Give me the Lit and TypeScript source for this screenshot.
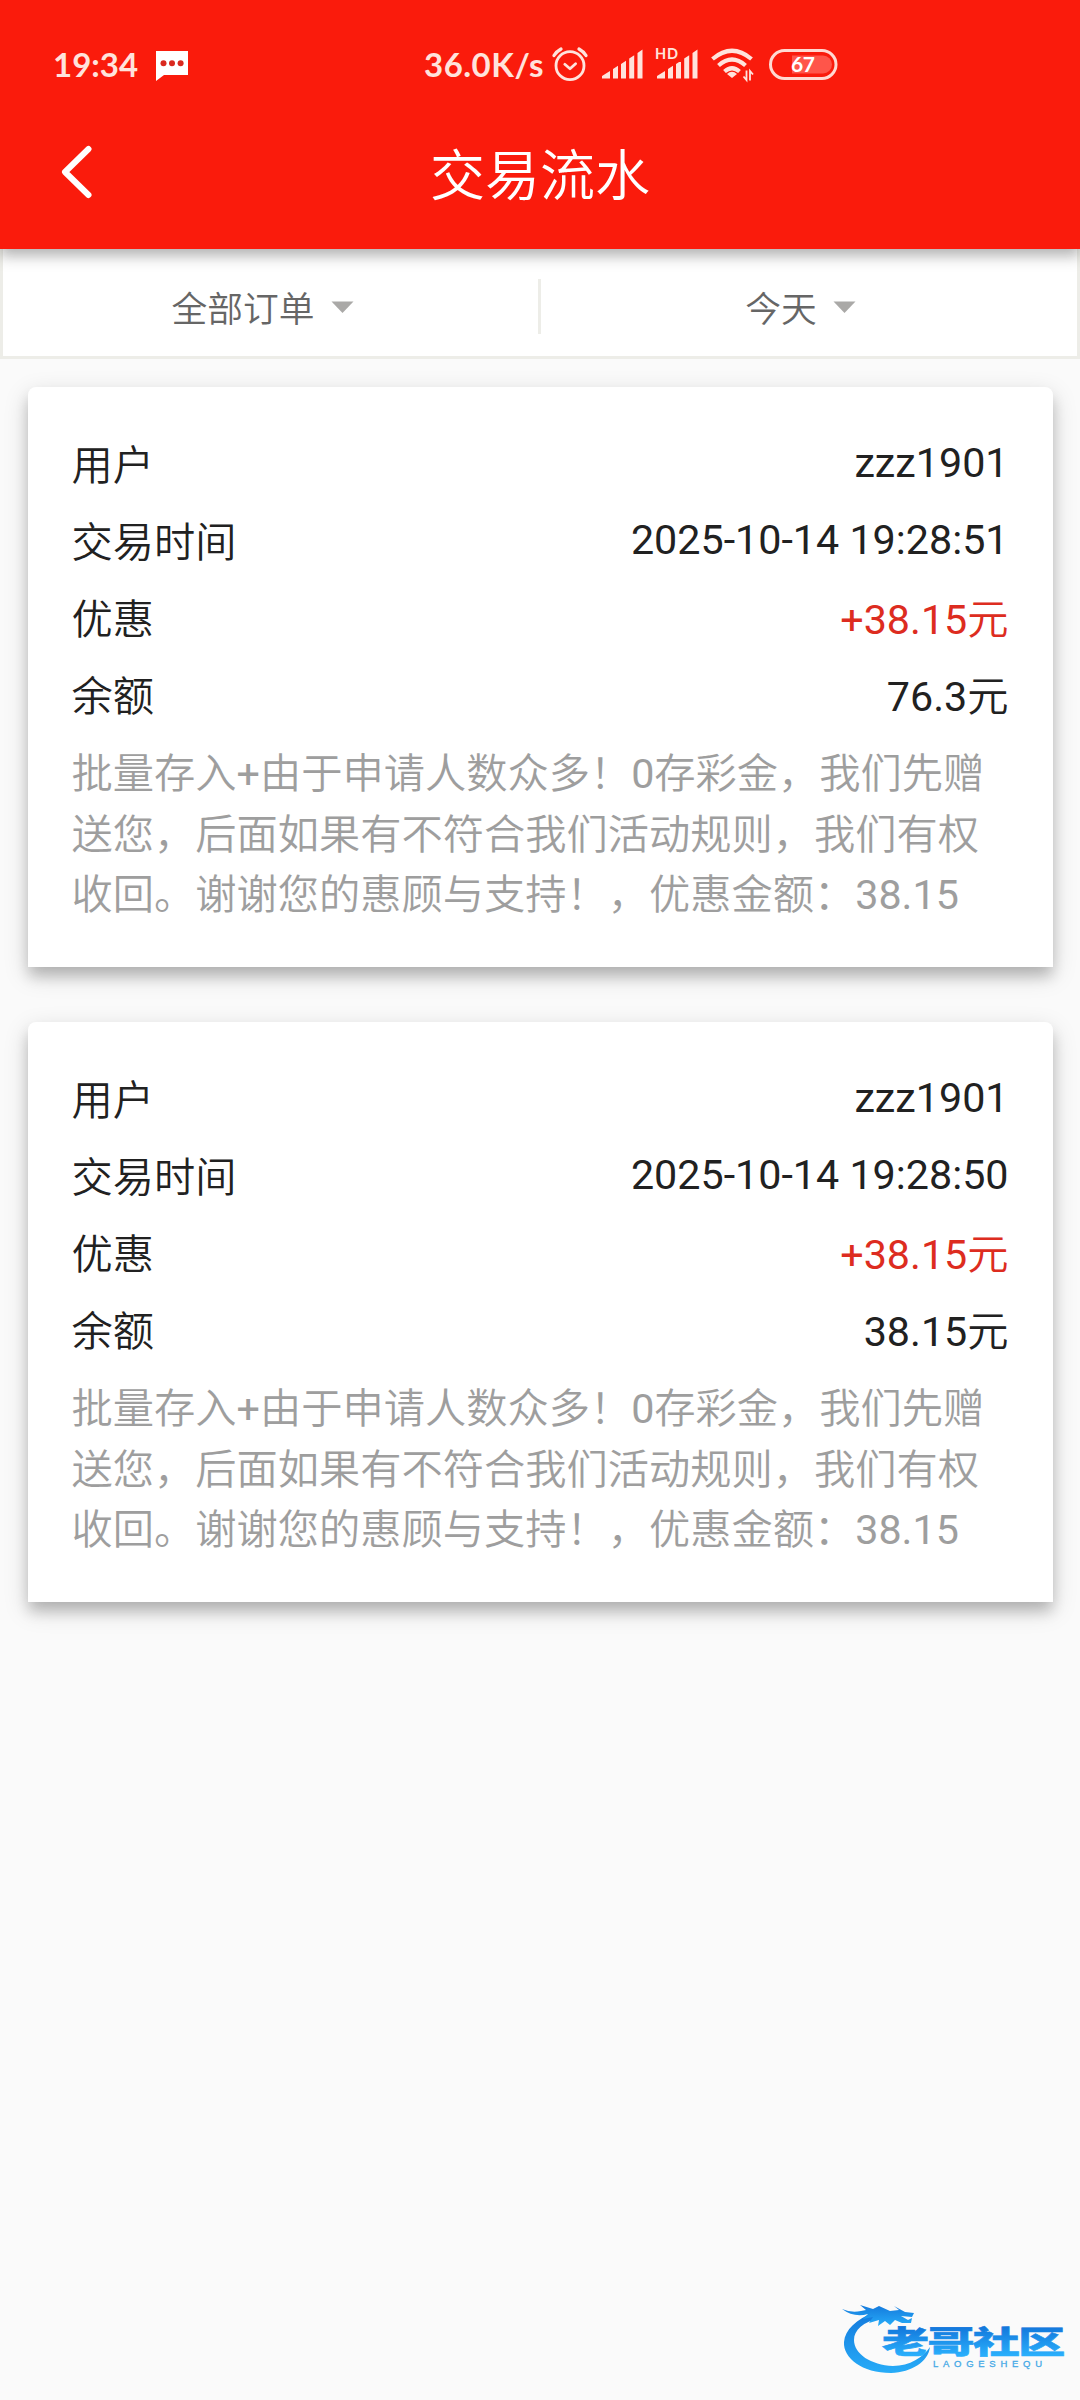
import { LitElement, html, css, svg } from "lit";
import { customElement, property } from "lit/decorators.js";

interface Transaction {
  user: string;
  time: string;
  bonus: string;
  balance: string;
  note: string;
}

const NOTE =
  "批量存入+由于申请人数众多！0存彩金，我们先赠送您，后面如果有不符合我们活动规则，我们有权收回。谢谢您的惠顾与支持！，优惠金额：38.15";

const TRANSACTIONS: Transaction[] = [
  { user: "zzz1901", time: "2025-10-14 19:28:51", bonus: "+38.15元", balance: "76.3元", note: NOTE },
  { user: "zzz1901", time: "2025-10-14 19:28:50", bonus: "+38.15元", balance: "38.15元", note: NOTE },
];

const signalBars = svg`
  <path d="M0 29.5V27l8-5v7.5z M11 20l5-3.2v12.7h-5z M19 15l5-3.2v17.7h-5z M27.2 9.500l5-3.300v23.300h-5z M35.500 4l5-3.500v29h-5z"/>`;

@customElement("status-bar")
class StatusBar extends LitElement {
  static styles = css`
    :host {
      display: flex;
      align-items: center;
      height: 95px;
      padding: 33px 0 0 53px;
      box-sizing: border-box;
      color: #ffe3dc;
      font: 700 33px/62px Lato, "Liberation Sans", sans-serif;
    }
    .time { width: 102px; letter-spacing: 0; }
    .chat { width: 269px; padding-top: 3px; }
    .rate { width: 126px; letter-spacing: 0.5px; white-space: nowrap; }
    svg { display: block; flex: none; overflow: visible; }
    .alarm { margin: 0 14px 0 2px; }
    .bars { margin: 0 13.500px 0 0; }
    .wifi { margin-right: 15px; }
    .hd { font: 700 14.500px Lato, sans-serif; }
    .level { font: 700 21px Lato, sans-serif; }
  `;

  render() {
    return html`
      <span class="time">19:34</span>
      <span class="chat">
        <svg width="34" height="32" viewBox="0 0 34 32">
          <path fill="#fff" d="M1 1h32v24H9l-8 6z" />
          <g fill="#d9291f"><circle cx="8.500" cy="13.200" r="3" /><circle cx="17" cy="13.200" r="3" /><circle cx="25.600" cy="13.200" r="3" /></g>
        </svg>
      </span>
      <span class="rate">36.0K/s</span>
      <svg class="alarm" width="36" height="34" viewBox="0 0 36 34" fill="none" stroke="#ffe3dc" stroke-width="2.800" stroke-linecap="round">
        <circle cx="18" cy="18.700" r="14" />
        <path d="M2 8.500Q4.500 4.500 9 2M34 8.500Q31.500 4.500 27 2" stroke-width="3.300" />
        <path d="m12.800 17.300 5.200 4.400 5.600-5" stroke-linejoin="round" />
      </svg>
      <svg class="bars" width="41" height="31" viewBox="0 0 41 31" fill="#ffe3dc">${signalBars}</svg>
      <svg class="bars" width="41" height="31" viewBox="0 0 41 31" fill="#ffe3dc">
        <clipPath id="below-hd"><path d="M0 13h24V0h17v31H0z" /></clipPath>
        <g clip-path="url(#below-hd)">${signalBars}</g>
        <text class="hd" x="-2" y="10" textLength="23">HD</text>
      </svg>
      <svg class="wifi" width="43" height="34" viewBox="0 0 43 34" fill="none" stroke="#ffe3dc" stroke-width="4.200">
        <path d="M1.500 12Q21 -4.500 40.500 12M7.500 18.500Q21 6.500 34.500 18.500M13.500 24.500Q21 18 28.500 24.500" />
        <path d="M21 31l-5-4q5-4.300 10 0z" fill="#ffe3dc" stroke="none" />
        <path d="M35.500 23.500v9.500l-3-3.500M39 33.500v-9.500l3 3.500" stroke-width="1.800" />
      </svg>
      <svg width="69" height="31" viewBox="0 0 69 31">
        <rect x="1.500" y="1.500" width="65.500" height="28" rx="14" fill="none" stroke="#ffd9d2" stroke-width="3" />
        <path d="M23 6.500h31a9 9 0 0 1 0 18H23z" fill="#ff554a" />
        <text class="level" x="22" y="23.300" fill="#fff" textLength="24">67</text>
      </svg>
    `;
  }
}

@customElement("filter-cell")
class FilterCell extends LitElement {
  static styles = css`
    :host { display: flex; flex: 1; align-items: center; justify-content: center; }
    .label { padding-top: 6px; font-size: 35.75px; line-height: 52px; color: #666; }
    .arrow { display: block; width: 55px; height: 55px; }
  `;
  @property() label = "";

  render() {
    return html`<span class="label">${this.label}</span>
      <svg class="arrow" viewBox="0 0 24 24"><path fill="#aaa9a7" d="m7.200 9.800 4.800 5 4.800-5z" /></svg>`;
  }
}

@customElement("transaction-card")
class TransactionCard extends LitElement {
  static styles = css`
    :host {
      display: block;
      box-sizing: border-box;
      height: 580px;
      padding: 38px 44px 0;
      border-radius: 8px 8px 0 0;
      background: #fff;
      color: #212121;
      font-size: 41.25px;
      box-shadow: 0 10px 14px -1px rgba(0, 0, 0, 0.18), 0 8px 24px rgba(0, 0, 0, 0.17);
    }
    .row { display: flex; justify-content: space-between; height: 77.3px; line-height: 77.3px; }
    .cjk { padding-top: 2px; }
    .label { padding-top: 3px; }
    .bonus { color: #dd2c20; }
    .note { margin: 10px 0 0; line-height: 60.4px; color: #9e9e9e; }
  `;
  @property({ attribute: false }) item!: Transaction;

  render() {
    const { user, time, bonus, balance, note } = this.item;
    return html`
      <div class="row"><span class="label">用户</span><span>${user}</span></div>
      <div class="row"><span class="label">交易时间</span><span>${time}</span></div>
      <div class="row"><span class="cjk">优惠</span><span class="cjk bonus">${bonus}</span></div>
      <div class="row"><span class="cjk">余额</span><span class="cjk">${balance}</span></div>
      <p class="note">${note}</p>
    `;
  }
}

@customElement("site-mark")
class SiteMark extends LitElement {
  static styles = css`
    :host { display: block; width: 224px; height: 76px; }
    svg { display: block; overflow: visible; }
    .name { font: 900 40px "Noto Sans CJK SC", sans-serif; }
    .latin { font: 400 9.500px "Liberation Sans", sans-serif; }
  `;

  render() {
    return html`
      <svg width="224" height="76" viewBox="0 0 224 76">
        <defs>
          <linearGradient id="ring" x1="0" y1="0" x2="0" y2="1">
            <stop offset="0" stop-color="#1479dc" /><stop offset="1" stop-color="#27acf8" />
          </linearGradient>
          <linearGradient id="word" gradientUnits="userSpaceOnUse" x1="0" y1="-33" x2="0" y2="3">
            <stop offset="0" stop-color="#1378dc" /><stop offset="1" stop-color="#29aefb" />
          </linearGradient>
        </defs>
        <g fill="url(#ring)">
          <path d="M33 15C14 22 3 33 2 45C1 61 20 76 49 76C70 75 86 65 88 50C81 60 68 69 51 69C29 68 12 57 12 43C12 33 21 25 38 21z" />
          <path d="M0 12Q9 16 19 14L24 13L18 8L31 12L37 9L48 14L57 13L52 9L63 15L72 16L70 20L59 19L66 23L70 21L69 26L60 26L53 23L48 28L43 24L36 29L37 23L27 26L31 20L21 22L26 17Q12 21 0 12z" />
        </g>
        <text class="name" transform="translate(40 55.500) scale(1.175 .76)" fill="url(#word)" stroke="url(#word)" stroke-width=".8" textLength="156">老哥社区</text>
        <text class="latin" x="91" y="70" fill="#45a9e6" stroke="#45a9e6" stroke-width=".3" textLength="109">LAOGESHEQU</text>
      </svg>
    `;
  }
}

@customElement("app-root")
class AppRoot extends LitElement {
  static styles = css`
    :host {
      display: block;
      position: relative;
      height: 2400px;
      overflow: hidden;
      background: #fafafa;
      font-family: Roboto, "Noto Sans CJK SC DemiLight", "Noto Sans CJK SC", sans-serif;
    }
    .header {
      position: relative;
      z-index: 1;
      height: 249px;
      background: #fa1b0c;
      box-shadow: 0 8px 14px rgba(0, 0, 0, 0.22), 0 3px 12px rgba(0, 0, 0, 0.12);
    }
    .toolbar { display: grid; grid-template-columns: 154px 1fr 154px; align-items: center; height: 154px; }
    .back { display: block; margin-left: 60px; }
    .title { margin: 0; padding-top: 8px; text-align: center; font-size: 55px; line-height: 80px; font-weight: 400; color: #fff; }
    .filters {
      display: flex;
      align-items: center;
      box-sizing: border-box;
      height: 110px;
      padding: 8px 1px 0 0;
      border: solid #edede8;
      border-width: 0 3px 3px;
      background: #fff;
    }
    .divider { width: 3px; height: 55px; background: #edede8; }
    .list { display: flex; flex-direction: column; gap: 55px; padding: 28px 27.5px; }
    .mark { position: absolute; left: 842px; top: 2297px; }
  `;

  render() {
    return html`
      <header class="header">
        <status-bar></status-bar>
        <div class="toolbar">
          <svg class="back" width="34" height="54" viewBox="0 0 34 54" fill="none" stroke="#fff" stroke-width="6" stroke-linecap="round" stroke-linejoin="round">
            <path d="M28.500 4 5 27l23.500 23" />
          </svg>
          <h1 class="title">交易流水</h1>
        </div>
      </header>
      <nav class="filters">
        <filter-cell label="全部订单"></filter-cell>
        <div class="divider"></div>
        <filter-cell label="今天"></filter-cell>
      </nav>
      <main class="list">
        ${TRANSACTIONS.map((item) => html`<transaction-card .item=${item}></transaction-card>`)}
      </main>
      <site-mark class="mark"></site-mark>
    `;
  }
}
